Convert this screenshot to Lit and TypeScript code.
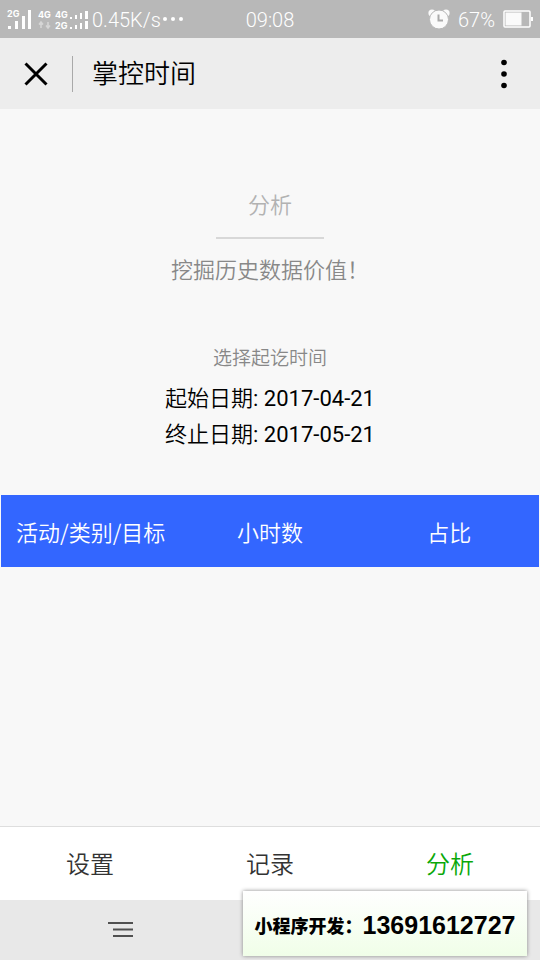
import { LitElement, html, css, svg } from "lit";
import { customElement, state } from "lit/decorators.js";
import { classMap } from "lit/directives/class-map.js";

@customElement("status-bar")
class StatusBar extends LitElement {
  static styles = css`
    :host {
      display: grid;
      grid-template-columns: 1fr auto 1fr;
      align-items: center;
      height: 38px;
      padding: 1px 7px 0;
      box-sizing: border-box;
      background: #b8b8b8;
      color: #fff;
      font: 300 20px/24px Roboto, sans-serif;
    }
    .side {
      display: flex;
      align-items: center;
      white-space: nowrap;
    }
    .end {
      justify-content: flex-end;
      gap: 8px;
    }
    svg {
      display: block;
      flex: none;
    }
    .net {
      font: 700 9px Inter, sans-serif;
    }
    .speed {
      margin-left: 2px;
    }
    .more {
      margin-left: 1px;
    }
  `;

  render() {
    return html`
      <div class="side">
        <svg class="net" width="83" height="24" viewBox="7 7 83 24" fill="#fff">
          <text x="7" y="16" font-size="9">2G</text>
          <rect x="8" y="25" width="3" height="3" />
          <rect x="15" y="20" width="3" height="8" />
          <rect x="22" y="15" width="3" height="13" />
          <rect x="28" y="9" width="3" height="19" />
          <text x="38" y="17">4G</text>
          <path d="M41 27v-5M39 23.5l2-2.5 2 2.5M48 21v5M46 24.500l2 2.500 2-2.500" fill="none" stroke="#d6d6d6" stroke-width="1.500" />
          <text x="55" y="17">4G</text>
          <text x="55" y="28">2G</text>
          ${[18, 28].map(
            (y) => svg`
              <rect x="70" y=${y - 2} width="2" height="2" />
              <rect x="75" y=${y - 4} width="2" height="4" />
              <rect x="80" y=${y - 6} width="2" height="6" />
              <rect x="85" y=${y - 8} width="3" height="8" />`
          )}
        </svg>
        <span class="speed">0.45K/s</span>
        <svg class="more" width="22" height="6" viewBox="0 0 22 6" fill="#fff">
          <circle cx="3" cy="2" r="2" />
          <circle cx="11" cy="2" r="2" />
          <circle cx="19" cy="2" r="2" />
        </svg>
      </div>
      <time>09:08</time>
      <div class="side end">
        <svg width="22" height="22" viewBox="0 0 22 22">
          <circle cx="4" cy="4" r="3.600" fill="#fafafa" />
          <circle cx="18" cy="4" r="3.600" fill="#fafafa" />
          <circle cx="11" cy="10.500" r="9.500" fill="#fafafa" stroke="#b8b8b8" />
          <path d="M10.500 5.500v6h4.500" fill="none" stroke="#aaa" stroke-width="2" />
        </svg>
        <span>67%</span>
        <svg width="30" height="20" viewBox="0 0 30 20">
          <rect x="1" y="1" width="26" height="16" rx="1" fill="none" stroke="#fff" stroke-width="1.500" />
          <rect x="2.500" y="2.500" width="16" height="13" fill="#fafafa" />
          <rect x="28" y="7" width="2" height="4" fill="#fff" />
        </svg>
      </div>
    `;
  }
}

@customElement("app-root")
class AppRoot extends LitElement {
  @state() private active = "分析";

  private tabs = ["设置", "记录", "分析"];
  private dates = [
    { label: "起始日期", value: "2017-04-21" },
    { label: "终止日期", value: "2017-05-21" },
  ];

  static styles = css`
    :host {
      display: flex;
      flex-direction: column;
      min-height: 100vh;
      background: #f8f8f8;
      color: #000;
      font: 350 22px/36px Roboto, "Noto Sans CJK SC", sans-serif;
    }
    button {
      margin: 0;
      padding: 0;
      border: 0;
      background: none;
      color: inherit;
      font: inherit;
      cursor: pointer;
    }
    svg {
      display: block;
    }
    h1,
    h2,
    h3,
    p {
      margin: 0;
      font-size: inherit;
      font-weight: inherit;
    }
    .bar {
      display: flex;
      align-items: center;
      height: 71px;
      padding: 0 24px;
      background: #ededed;
    }
    .bar h1 {
      flex: 1;
      margin-left: 24px;
      padding-left: 19px;
      border-left: 1px solid #a9a9a9;
      font-size: 26px;
    }
    main {
      flex: 1;
      display: flex;
      flex-direction: column;
      align-items: center;
      padding-top: 79px;
    }
    .title {
      color: #b2b2b2;
    }
    .rule {
      width: 20%;
      height: 2px;
      margin: 13px 0 14px;
      border: 0;
      background: #d8d8d8;
    }
    .desc {
      color: #888;
    }
    .hint {
      margin: 52px 0 4px;
      color: #888;
      font-size: 19px;
    }
    .date {
      display: block;
      font-weight: 400;
    }
    .cjk {
      font-weight: 350;
    }
    .report {
      align-self: stretch;
      margin: 42px 1px 0;
    }
    table {
      width: 100%;
      table-layout: fixed;
      border-collapse: collapse;
      background: #36f;
      color: #fff;
    }
    th {
      height: 72px;
      padding: 0;
      font-weight: inherit;
      font-family: "Noto Sans CJK SC", sans-serif;
    }
    .tabs {
      display: grid;
      grid-template-columns: repeat(3, 1fr);
      height: 73px;
      border-top: 1px solid #dedede;
      background: #fff;
      color: #333;
    }
    .tab {
      padding-top: 2px;
      font-size: 24px;
    }
    .tab.on {
      color: #09a809;
    }
    .system {
      display: flex;
      position: relative;
      align-items: center;
      height: 60px;
      padding-left: 20%;
      box-sizing: border-box;
      background: #e8e8e8;
    }
    .promo {
      position: absolute;
      right: 13px;
      bottom: 4px;
      display: flex;
      align-items: center;
      justify-content: center;
      width: 284px;
      height: 65px;
      padding-top: 2px;
      box-sizing: border-box;
      background: linear-gradient(#fff, #f0fee8);
      box-shadow: 0 0 4px #888;
      font: 900 18px/36px "Noto Sans CJK SC", sans-serif;
      white-space: nowrap;
    }
    .phone {
      font: 700 25px/36px "Liberation Sans", sans-serif;
    }
  `;

  render() {
    return html`
      <status-bar></status-bar>
      <header class="bar">
        <button aria-label="关闭">
          <svg width="24" height="24" viewBox="0 0 24 24" stroke="#000" stroke-width="3">
            <path d="M1.500 1.500l21 21M22.500 1.500l-21 21" />
          </svg>
        </button>
        <h1>掌控时间</h1>
        <button aria-label="更多">
          <svg width="24" height="30" viewBox="0 0 24 30">
            <circle cx="12" cy="3.500" r="2.800" />
            <circle cx="12" cy="15" r="2.800" />
            <circle cx="12" cy="26.500" r="2.800" />
          </svg>
        </button>
      </header>
      <main>
        <h2 class="title">分析</h2>
        <hr class="rule" />
        <p class="desc">挖掘历史数据价值！</p>
        <h3 class="hint">选择起讫时间</h3>
        ${this.dates.map(
          (d) => html`<button class="date"><span class="cjk">${d.label}</span>: ${d.value}</button>`
        )}
        <div class="report">
          <table>
            <thead>
              <tr>
                <th scope="col">活动/类别/目标</th>
                <th scope="col">小时数</th>
                <th scope="col">占比</th>
              </tr>
            </thead>
          </table>
        </div>
      </main>
      <nav class="tabs">
        ${this.tabs.map(
          (t) => html`<button
            class=${classMap({ tab: true, on: t === this.active })}
            @click=${() => (this.active = t)}
          >${t}</button>`
        )}
      </nav>
      <footer class="system">
        <button aria-label="菜单">
          <svg width="25" height="18" viewBox="0 0 25 18" stroke="#505050" stroke-width="2">
            <path d="M0 2h25M5 8.500h20M5 15h20" />
          </svg>
        </button>
        <aside class="promo">
          <span>小程序开发：</span><span class="phone">13691612727</span>
        </aside>
      </footer>
    `;
  }
}
